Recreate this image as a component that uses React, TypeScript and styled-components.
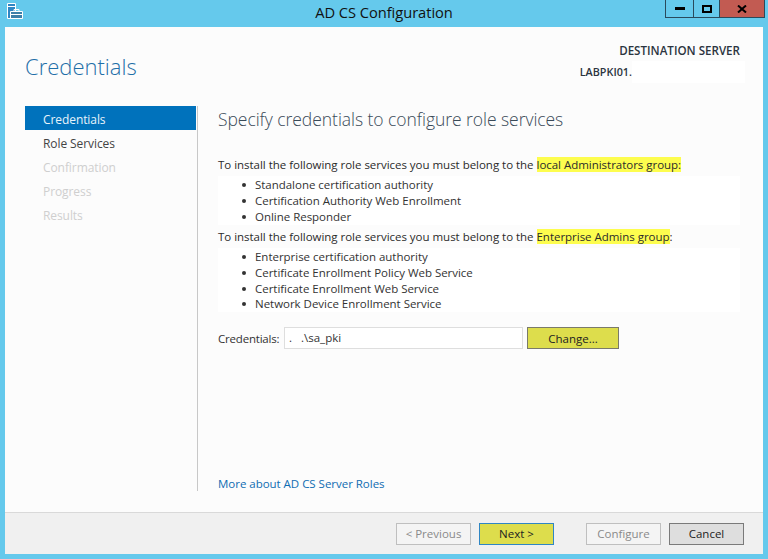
import * as React from 'react';
import styled, { createGlobalStyle } from 'styled-components';

const GlobalStyle = createGlobalStyle`
  html, body {
    margin: 0;
    padding: 0;
    background: #65c9ec;
    font-family: 'Open Sans', 'Noto Sans', sans-serif;
  }
`;

const Window = styled.div`
  width: 768px;
  height: 559px;
  box-sizing: border-box;
  padding: 0 5px 5px;
  display: flex;
  flex-direction: column;
  background: #65c9ec;
  overflow: hidden;
  color: #2b2b2b;
`;

const TitleBar = styled.div`
  height: 27px;
  flex: none;
  position: relative;
  display: flex;
  justify-content: center;
  align-items: center;
  font-size: 14.7px;
  letter-spacing: -0.05px;
  color: #111;
  padding-bottom: 4px;
  box-sizing: border-box;
`;

const AppIcon = styled.svg`
  position: absolute;
  left: 2px;
  top: 3px;
  width: 16px;
  height: 16px;
`;

const Controls = styled.div`
  position: absolute;
  top: 0;
  right: -2px;
  display: flex;
  height: 18px;
  box-sizing: border-box;
  border: 1px solid #2a4a5c;
  border-top: 0;
`;

const ControlButton = styled.div<{ $width: number; $close?: boolean }>`
  width: ${(p) => p.$width}px;
  display: flex;
  align-items: center;
  justify-content: center;
  background: ${(p) => (p.$close ? '#c25b52' : 'transparent')};
  & + & {
    border-left: 1px solid #2a4a5c;
  }
`;

const Client = styled.div`
  flex: 1;
  min-height: 0;
  display: flex;
  flex-direction: column;
  background: #fcfcfc;
`;

const Header = styled.div`
  height: 79px;
  flex: none;
  display: flex;
  justify-content: space-between;
  padding: 15px 23px 0 20px;
  box-sizing: border-box;
`;

const PageTitle = styled.div`
  font-size: 22px;
  font-weight: 300;
  color: #1f6fa8;
  line-height: 30px;
  margin-top: 9px;
`;

const ServerInfo = styled.div`
  display: flex;
  flex-direction: column;
  align-items: flex-end;
  color: #2b3440;
`;

const ServerLabel = styled.div`
  font-weight: 600;
  line-height: 18px;
  font-size: 11.6px;
`;

const ServerName = styled.div`
  display: flex;
  align-items: center;
  margin-top: 1px;
  margin-right: -5px;
  font-weight: 600;
  font-size: 10.8px;
  line-height: 22px;
`;

const RedactedName = styled.span`
  display: block;
  width: 113px;
  height: 22px;
  background: #ffffff;
`;

const Body = styled.div`
  flex: 1;
  min-height: 0;
  display: flex;
  padding-left: 20px;
`;

const Sidebar = styled.nav`
  width: 172px;
  height: 385px;
  flex: none;
  border-right: 1px solid #c8c8c8;
`;

const NavItem = styled.div<{ $state: 'active' | 'enabled' | 'disabled' }>`
  height: 24px;
  line-height: 27px;
  padding-left: 18px;
  margin-right: 1px;
  font-size: 12px;
  letter-spacing: -0.08px;
  background: ${(p) => (p.$state === 'active' ? '#0072bc' : 'transparent')};
  color: ${(p) => (p.$state === 'active' ? '#e8f4fb' : p.$state === 'enabled' ? '#444' : '#cfcfcf')};
`;

const Main = styled.div`
  flex: 1;
  height: 385px;
  padding: 0 23px 0 20px;
  display: flex;
  flex-direction: column;
`;

const Heading = styled.div`
  font-size: 17.5px;
  font-weight: 300;
  letter-spacing: -0.05px;
  line-height: 26px;
  color: #3a4a58;
`;

const Intro = styled.div<{ $first?: boolean }>`
  margin-top: ${(p) => (p.$first ? '23px' : '2px')};
  height: 20px;
  line-height: 20px;
  font-size: 11.5px;
  letter-spacing: -0.025px;
  color: #2b2b2b;
  white-space: nowrap;
`;

const Mark = styled.span`
  background: #fdfd4e;
`;

const BulletList = styled.ul`
  margin: 1px 0 0;
  padding: 1px 0 0 37px;
  list-style: none;
  background: #ffffff;
`;

const Bullet = styled.li<{ $h: number }>`
  position: relative;
  height: ${(p) => p.$h}px;
  line-height: ${(p) => p.$h}px;
  font-size: 11.5px;
  letter-spacing: -0.025px;
  color: #333;
  &::before {
    content: '';
    position: absolute;
    left: -13px;
    top: 6px;
    width: 4px;
    height: 4px;
    border-radius: 50%;
    background: #333;
  }
`;

const CredentialsRow = styled.div`
  display: flex;
  align-items: center;
  margin-top: 15px;
  height: 22px;
  font-size: 11.5px;
  color: #333;
`;

const CredentialsLabel = styled.span`
  width: 66px;
  flex: none;
  letter-spacing: -0.2px;
`;

const CredentialsInput = styled.div`
  width: 239px;
  height: 22px;
  box-sizing: border-box;
  padding-left: 4px;
  line-height: 20px;
  background: #fff;
  border: 1px solid #dedede;
  white-space: pre;
  color: #333;
`;

const LinkRow = styled.a`
  margin-top: auto;
  margin-bottom: -1px;
  font-size: 11.5px;
  letter-spacing: -0.025px;
  line-height: 16px;
  color: #0f6cb2;
  text-decoration: none;
`;

const Footer = styled.div`
  height: 42px;
  flex: none;
  box-sizing: border-box;
  display: flex;
  align-items: center;
  padding: 0 19px 0 391px;
  background: #f0f0f0;
  border-top: 1px solid #d9d9d9;
`;

type ButtonTone = 'disabled' | 'accent' | 'plain';

const Button = styled.div<{ $tone: ButtonTone; $gap?: number; $width?: number }>`
  width: ${(p) => p.$width ?? 75}px;
  height: 22px;
  flex: none;
  box-sizing: border-box;
  margin-left: ${(p) => p.$gap ?? 0}px;
  display: flex;
  align-items: center;
  justify-content: center;
  font-size: 11.5px;
  border: 1px solid
    ${(p) => (p.$tone === 'disabled' ? '#bfbfbf' : p.$tone === 'plain' ? '#7a7a7a' : '#5f7f8f')};
  background: ${(p) => (p.$tone === 'disabled' ? '#f4f4f4' : p.$tone === 'plain' ? '#dedede' : '#dddd4c')};
  color: ${(p) => (p.$tone === 'disabled' ? '#8a8a8a' : '#222')};
`;

const ChangeButton = styled(Button)`
  margin-left: 4px;
  border-color: #7a7a6a;
`;

const NextButton = styled(Button)`
  border-color: #2f86c4;
`;

const ServerToolboxIcon = () => (
  <AppIcon viewBox="0 0 16 16" fill="none" stroke="#fff" strokeWidth="1">
    <path d="M.5.5h8v15H.5z" fill="#2f86c4" />
    <path d="M1 3.5h7" />
    <path d="M3.5 8.5h12v7h-12z" fill="#3d7fa8" />
    <path d="M7 8V6.5h5V8" />
    <path d="M4 11.5h11" />
  </AppIcon>
);

const App = () => (
  <>
    <GlobalStyle />
    <Window>
      <TitleBar>
        <ServerToolboxIcon />
        AD CS Configuration
        <Controls>
          <ControlButton $width={27}>
            <svg width="10" height="3" viewBox="0 0 10 3">
              <rect width="10" height="3" fill="#000" />
            </svg>
          </ControlButton>
          <ControlButton $width={25}>
            <svg width="10" height="8" viewBox="0 0 10 8">
              <rect x="1" y="1" width="8" height="6" fill="none" stroke="#000" strokeWidth="2" />
            </svg>
          </ControlButton>
          <ControlButton $width={44} $close>
            <svg width="10" height="8" viewBox="0 0 10 8">
              <path d="M1 0.5l8 7M9 0.5l-8 7" stroke="#000" strokeWidth="2" />
            </svg>
          </ControlButton>
        </Controls>
      </TitleBar>
      <Client>
        <Header>
          <PageTitle>Credentials</PageTitle>
          <ServerInfo>
            <ServerLabel>DESTINATION SERVER</ServerLabel>
            <ServerName>
              LABPKI01.
              <RedactedName />
            </ServerName>
          </ServerInfo>
        </Header>
        <Body>
          <Sidebar>
            <NavItem $state="active">Credentials</NavItem>
            <NavItem $state="enabled">Role Services</NavItem>
            <NavItem $state="disabled">Confirmation</NavItem>
            <NavItem $state="disabled">Progress</NavItem>
            <NavItem $state="disabled">Results</NavItem>
          </Sidebar>
          <Main>
            <Heading>Specify credentials to configure role services</Heading>
            <Intro $first>
              To install the following role services you must belong to the <Mark>local Administrators group:</Mark>
            </Intro>
            <BulletList>
              <Bullet $h={16}>Standalone certification authority</Bullet>
              <Bullet $h={16}>Certification Authority Web Enrollment</Bullet>
              <Bullet $h={16}>Online Responder</Bullet>
            </BulletList>
            <Intro>
              To install the following role services you must belong to the <Mark>Enterprise Admins group</Mark>:
            </Intro>
            <BulletList>
              <Bullet $h={16}>Enterprise certification authority</Bullet>
              <Bullet $h={16}>Certificate Enrollment Policy Web Service</Bullet>
              <Bullet $h={15}>Certificate Enrollment Web Service</Bullet>
              <Bullet $h={16}>Network Device Enrollment Service</Bullet>
            </BulletList>
            <CredentialsRow>
              <CredentialsLabel>Credentials:</CredentialsLabel>
              <CredentialsInput>{'.   .\\sa_pki'}</CredentialsInput>
              <ChangeButton $tone="accent" $width={92}>
                Change...
              </ChangeButton>
            </CredentialsRow>
            <LinkRow>More about AD CS Server Roles</LinkRow>
          </Main>
        </Body>
        <Footer>
          <Button $tone="disabled">&lt; Previous</Button>
          <NextButton $tone="accent" $gap={8}>
            Next &gt;
          </NextButton>
          <Button $tone="disabled" $gap={32}>
            Configure
          </Button>
          <Button $tone="plain" $gap={8}>
            Cancel
          </Button>
        </Footer>
      </Client>
    </Window>
  </>
);

export default App;
